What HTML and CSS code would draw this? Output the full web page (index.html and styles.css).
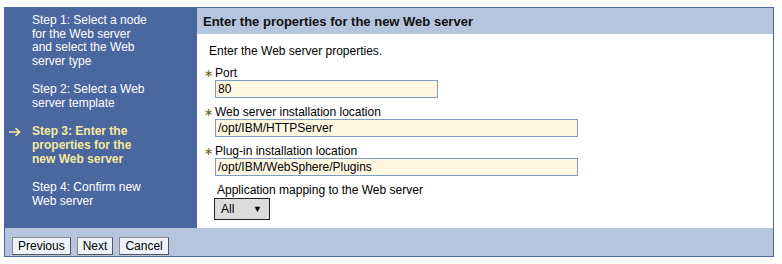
FILE: index.html
```html
<!DOCTYPE html>
<html lang="en">
<head>
    <meta charset="UTF-8">
    <title>New Web server</title>
    <link rel="stylesheet" href="styles.css">
</head>
<body>
    <div class="wizard">
        <div class="wizard-body">
            <!-- Steps -->
            <ul class="steps">
                <li>Step 1: Select a node for the Web server and select the Web server type</li>
                <li>Step 2: Select a Web server template</li>
                <li class="current">
                    <svg class="arrow" width="12" height="10" viewBox="0 0 12 10">
                        <path d="M0 5H10.5M6.5 1L10.5 5L6.5 9" fill="none" stroke="#f4ea9c" stroke-width="1.6"/>
                    </svg>
                    Step 3: Enter the properties for the new Web server
                </li>
                <li>Step 4: Confirm new Web server</li>
            </ul>

            <div class="panel">
                <div class="panel-title">Enter the properties for the new Web server</div>
                <div class="panel-content">
                    <p class="intro">Enter the Web server properties.</p>

                    <div class="field">
                        <label for="port"><span class="req">&lowast;</span>Port</label>
                        <input type="text" id="port" class="short" value="80">
                    </div>
                    <div class="field">
                        <label for="installLoc"><span class="req">&lowast;</span>Web server installation location</label>
                        <input type="text" id="installLoc" value="/opt/IBM/HTTPServer">
                    </div>
                    <div class="field">
                        <label for="pluginLoc"><span class="req">&lowast;</span>Plug-in installation location</label>
                        <input type="text" id="pluginLoc" value="/opt/IBM/WebSphere/Plugins">
                    </div>
                    <div class="field">
                        <label for="mapping">Application mapping to the Web server</label>
                        <div class="select" id="mapping"><span>All</span><span class="caret">&#9660;</span></div>
                    </div>
                </div>
            </div>
        </div>

        <div class="wizard-footer">
            <button type="button">Previous</button>
            <button type="button">Next</button>
            <button type="button">Cancel</button>
        </div>
    </div>
</body>
</html>
```

FILE: styles.css
```css
body {
    margin: 7px 0 0 4px;
    font-family: "Liberation Sans", Arial, sans-serif;
    font-size: 12px;
    color: #000;
    background: #fff;
}

.wizard {
    width: 770px;
    border: 1px solid #4a67a0;
    border-top: none;
    box-sizing: border-box;
}

.wizard-body {
    display: flex;
    height: 221px;
}

/* Liste des étapes */
.steps {
    width: 192px;
    margin: 0;
    padding: 7px 46px 0 27px;
    box-sizing: border-box;
    list-style: none;
    background-color: #4a67a0;
    color: #fff;
    line-height: 13.7px;
}

.steps li {
    position: relative;
    margin-bottom: 14.5px;
}

.steps li.current {
    color: #f4ea9c;
    font-weight: bold;
}

.arrow {
    position: absolute;
    left: -23px;
    top: 2px;
}

.panel {
    flex: 1;
    border-top: 1px solid #4a67a0;
    background: #fff;
}

.panel-title {
    height: 26px;
    line-height: 27px;
    padding-left: 6px;
    background-color: #b5c5de;
    font-size: 13px;
    font-weight: bold;
    color: #111;
}

.panel-content {
    padding: 10px 0 0 18px;
}

.intro {
    margin: 0 0 8px -6px;
    line-height: 14px;
}

.field {
    margin-bottom: 7px;
}

.field label {
    display: block;
    line-height: 14px;
    margin-left: 2px;
}

.req {
    display: inline-block;
    width: 11px;
    margin-left: -13px;
    color: #6b5e10;
    font-size: 11px;
}

.field input {
    display: block;
    width: 363px;
    height: 18px;
    margin: 0;
    padding: 0 2px;
    box-sizing: border-box;
    border: 1px solid #7f9dc4;
    background-color: #fff7e0;
    font-family: "Liberation Sans", Arial, sans-serif;
    font-size: 12px;
    color: #000;
}

.field input.short {
    width: 223px;
}

.select {
    display: flex;
    justify-content: space-between;
    align-items: center;
    width: 56px;
    height: 22px;
    margin: 1px 0 0 -1px;
    padding: 0 7px 0 6px;
    box-sizing: border-box;
    border: 1px solid #222;
    background-color: #dcdcdc;
}

.caret {
    font-size: 9px;
}

.wizard-footer {
    display: flex;
    gap: 6px;
    height: 28px;
    padding: 9px 0 0 7px;
    box-sizing: border-box;
    background-color: #b5c5de;
}

.wizard-footer button {
    height: 18px;
    padding: 0 5px;
    border: 1px solid #8a8a8a;
    border-right-color: #555;
    border-bottom-color: #555;
    background-color: #eef3fb;
    font-family: "Liberation Sans", Arial, sans-serif;
    font-size: 12px;
    color: #000;
    line-height: 16px;
}
```
